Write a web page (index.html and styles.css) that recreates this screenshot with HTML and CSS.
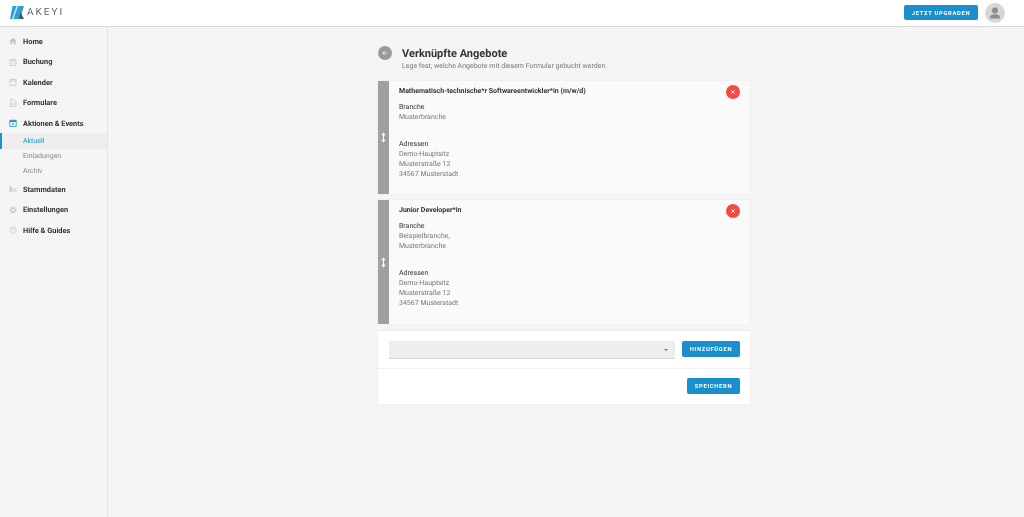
FILE: index.html
```html
<!DOCTYPE html>
<html lang="de">
<head>
    <meta charset="UTF-8">
    <title>Verknüpfte Angebote</title>
    <link rel="stylesheet" href="styles.css">
</head>
<body>
    <header class="topbar">
        <div class="logo">
            <svg class="logo-mark" width="14" height="13" viewBox="0 0 14 13">
                <path d="M2.5 0 H14 L10 13 H0 Z" fill="#2ba3d6"/>
                <path d="M8 0 L3.4 13 H2.2 L6.6 0 Z" fill="#d8f0fa"/>
                <path d="M10.5 6 L14 13 H8.6 Z" fill="#4c5a62"/>
            </svg>
            <span class="logo-text">AKEYI</span>
        </div>
        <div class="topbar-right">
            <button class="btn upgrade">JETZT UPGRADEN</button>
            <div class="avatar">
                <svg width="20" height="20" viewBox="0 0 20 20">
                    <circle cx="10" cy="7.5" r="3" fill="#8d8d8d"/>
                    <path d="M5 15.5 C5 12 7 11.2 10 11.2 C13 11.2 15 12 15 15.5 Z" fill="#8d8d8d"/>
                </svg>
            </div>
        </div>
    </header>

    <div class="layout">
        <nav class="sidebar">
            <a class="nav-item">
                <svg class="nav-icon" viewBox="0 0 8 8"><path d="M4 .8 L7.6 4 H6.6 V7.2 H4.8 V5 H3.2 V7.2 H1.4 V4 H.4 Z" fill="#c4c4c4"/></svg>
                Home
            </a>
            <a class="nav-item">
                <svg class="nav-icon" viewBox="0 0 8 8"><path d="M1 1.5 H7 V7.4 H1 Z M1 3 H7" fill="none" stroke="#c8c8c8" stroke-width=".8"/><path d="M2.8 5.2 L3.8 6.1 L5.4 4.4" fill="none" stroke="#c8c8c8" stroke-width=".6"/></svg>
                Buchung
            </a>
            <a class="nav-item">
                <svg class="nav-icon" viewBox="0 0 8 8"><path d="M1 1.5 H7 V7.4 H1 Z M1 3 H7 M2.4 .6 V2 M5.6 .6 V2" fill="none" stroke="#c8c8c8" stroke-width=".8"/></svg>
                Kalender
            </a>
            <a class="nav-item">
                <svg class="nav-icon" viewBox="0 0 8 8"><path d="M1.5 .6 H5 L6.8 2.4 V7.4 H1.5 Z" fill="none" stroke="#c8c8c8" stroke-width=".8"/><path d="M2.8 4.2 H5.4 M2.8 5.6 H5.4" stroke="#c8c8c8" stroke-width=".6"/></svg>
                Formulare
            </a>
            <a class="nav-item">
                <svg class="nav-icon" viewBox="0 0 8 8"><path d="M.8 1.4 H7.2 V7.5 H.8 Z" fill="none" stroke="#1a93c9" stroke-width=".8"/><path d="M.8 1.4 H7.2 V3 H.8 Z M3.2 4.2 H4.8 V5.8 H3.2 Z M2 .5 H2.8 V1.6 H2 Z M5.2 .5 H6 V1.6 H5.2 Z" fill="#1a93c9"/></svg>
                Aktionen &amp; Events
            </a>
            <a class="sub-item active">Aktuell</a>
            <a class="sub-item">Einladungen</a>
            <a class="sub-item">Archiv</a>
            <a class="nav-item">
                <svg class="nav-icon" viewBox="0 0 8 8"><path d="M.4 1.4 H3 V7 H.4 Z" fill="#cfcfcf"/><path d="M3.4 3 H7.6 V7 H3.4 Z" fill="#dedede"/></svg>
                Stammdaten
            </a>
            <a class="nav-item">
                <svg class="nav-icon" viewBox="0 0 8 8"><circle cx="4" cy="4" r="2.2" fill="none" stroke="#c4c4c4" stroke-width="1.2"/><path d="M4 .4 V1.6 M4 6.4 V7.6 M.4 4 H1.6 M6.4 4 H7.6 M1.4 1.4 L2.2 2.2 M5.8 5.8 L6.6 6.6 M1.4 6.6 L2.2 5.8 M5.8 2.2 L6.6 1.4" stroke="#c4c4c4" stroke-width=".9"/></svg>
                Einstellungen
            </a>
            <a class="nav-item">
                <svg class="nav-icon" viewBox="0 0 8 8"><circle cx="4" cy="4" r="3.3" fill="none" stroke="#c8c8c8" stroke-width=".7"/><path d="M3 3.2 C3 1.9 5 1.9 5 3.2 C5 4 4 4 4 4.9 M4 5.5 V6.2" fill="none" stroke="#c8c8c8" stroke-width=".7"/></svg>
                Hilfe &amp; Guides
            </a>
        </nav>

        <main class="content">
            <div class="page-head">
                <div class="back">
                    <svg width="8" height="8" viewBox="0 0 8 8"><path d="M6.4 4 H1.8 M3.6 2.2 L1.8 4 L3.6 5.8" fill="none" stroke="#fff" stroke-width=".8"/></svg>
                </div>
                <div>
                    <h1>Verknüpfte Angebote</h1>
                    <p>Lege fest, welche Angebote mit diesem Formular gebucht werden.</p>
                </div>
            </div>

            <section class="offer offer-first">
                <div class="handle">
                    <svg width="7" height="11" viewBox="0 0 7 11"><path d="M3.5 1 V10" stroke="#fff" stroke-width="1"/><path d="M1.3 3.2 L3.5 .6 L5.7 3.2 Z M1.3 7.8 L3.5 10.4 L5.7 7.8 Z" fill="#fff"/></svg>
                </div>
                <div class="offer-body">
                    <h2>Mathematisch-technische*r Softwareentwickler*in (m/w/d)</h2>
                    <h3>Branche</h3>
                    <p>Musterbranche</p>
                    <h3 class="addr">Adressen</h3>
                    <p>Demo-Hauptsitz<br>Musterstraße 12<br>34567 Musterstadt</p>
                </div>
                <button class="remove" aria-label="Entfernen">
                    <svg width="6" height="6" viewBox="0 0 6 6"><path d="M1.2 1.2 L4.8 4.8 M4.8 1.2 L1.2 4.8" stroke="#fff" stroke-width=".9"/></svg>
                </button>
            </section>

            <section class="offer offer-second">
                <div class="handle">
                    <svg width="7" height="11" viewBox="0 0 7 11"><path d="M3.5 1 V10" stroke="#fff" stroke-width="1"/><path d="M1.3 3.2 L3.5 .6 L5.7 3.2 Z M1.3 7.8 L3.5 10.4 L5.7 7.8 Z" fill="#fff"/></svg>
                </div>
                <div class="offer-body">
                    <h2>Junior Developer*in</h2>
                    <h3>Branche</h3>
                    <p>Beispielbranche,<br>Musterbranche</p>
                    <h3 class="addr">Adressen</h3>
                    <p>Demo-Hauptsitz<br>Musterstraße 12<br>34567 Musterstadt</p>
                </div>
                <button class="remove" aria-label="Entfernen">
                    <svg width="6" height="6" viewBox="0 0 6 6"><path d="M1.2 1.2 L4.8 4.8 M4.8 1.2 L1.2 4.8" stroke="#fff" stroke-width=".9"/></svg>
                </button>
            </section>

            <section class="add-card">
                <div class="add-row">
                    <div class="select"><span class="caret"></span></div>
                    <button class="btn add">HINZUFÜGEN</button>
                </div>
                <div class="save-row">
                    <button class="btn save">SPEICHERN</button>
                </div>
            </section>
        </main>
    </div>
</body>
</html>
```

FILE: styles.css
```css
* { box-sizing: border-box; }
html, body { height: 100%; }
body { margin: 0; background: #f5f5f5; color: #333; font-family: Roboto, "Noto Sans", sans-serif; font-size: 7px; overflow: hidden; text-rendering: geometricPrecision; }

.topbar { height: 27px; background: #fff; border-bottom: 1px solid #d9d9d9; display: flex; align-items: center; justify-content: space-between; padding: 0 19px 1px 10px; will-change: transform; }
.logo { display: flex; align-items: center; gap: 3px; }
.logo-text { font-size: 10px; letter-spacing: 2px; color: #5c6870; }
.topbar-right { display: flex; align-items: center; gap: 7px; }
.avatar { width: 20px; height: 20px; border-radius: 50%; background: #d6d6d6; overflow: hidden; }

.btn { border: none; border-radius: 2px; background: #1a8fcb; color: #fff; font-family: inherit; font-size: 5.8px; font-weight: 700; letter-spacing: .7px; padding: 0; height: 15.5px; }
.upgrade { width: 74px; }
.add { width: 58px; }
.save { width: 53px; }

/* grey text antialiasing, the coloured fringes look wrong at this size */
.layout { display: flex; height: 490px; will-change: transform; }
.sidebar { width: 108px; border-right: 1px solid #e4e4e4; padding-top: 4.3px; flex-shrink: 0; }
.nav-item { display: flex; align-items: center; height: 20.4px; padding-left: 9px; gap: 6px; font-size: 7.4px; font-weight: 700; color: #333; }
.nav-icon { width: 8px; height: 8px; }
.sub-item { display: flex; align-items: center; height: 15.3px; padding-left: 23px; color: #888; font-size: 7px; }
.sub-item.active { color: #1a93d0; background: #eee; border-left: 2px solid #1a93d0; padding-left: 21px; }

.content { flex: 1; padding: 18px 0 0 270px; }
.page-head { display: flex; align-items: center; gap: 10px; width: 372px; height: 27px; margin-bottom: 9px; }
.back { width: 14px; height: 14px; border-radius: 50%; background: #999; display: flex; align-items: center; justify-content: center; align-self: flex-start; margin-top: 1px; }
h1 { margin: 0; font-size: 11px; line-height: 15px; font-weight: 700; color: #333; }
.page-head p { margin: 0; font-size: 7px; line-height: 10px; color: #777; }

.offer { position: relative; display: flex; width: 372px; background: #fafafa; box-shadow: 0 0 1px #ddd; }
.offer-first { height: 113px; margin-bottom: 6px; }
.offer-second { height: 124px; margin-bottom: 7px; }
.handle { width: 11px; background: #a0a0a0; display: flex; align-items: center; justify-content: center; flex-shrink: 0; }
.offer-body { padding: 4.5px 0 0 10px; }
h2 { margin: 0 0 5.5px; font-size: 7px; line-height: 11px; font-weight: 700; color: #333; }
h3 { margin: 0; font-size: 7px; line-height: 10px; font-weight: 400; color: #333; }
h3.addr { margin-top: 17px; }
.offer-body p { margin: 0; font-size: 7px; line-height: 10px; color: #777; }
.remove { position: absolute; top: 3.5px; right: 10px; width: 14px; height: 14px; border: none; border-radius: 50%; background: #f44a40; padding: 0; display: flex; align-items: center; justify-content: center; }

.add-card { width: 372px; height: 73px; background: #fff; box-shadow: 0 0 1px #ddd; }
.add-row { display: flex; align-items: flex-start; justify-content: space-between; height: 38px; padding: 10px 10px 0 11px; border-bottom: 1px solid #f1f1f1; }
.select { position: relative; width: 286px; height: 17.5px; background: #eee; border-bottom: 1px solid #d6d6d6; }
.caret { position: absolute; right: 7px; top: 8px; border-left: 2.5px solid transparent; border-right: 2.5px solid transparent; border-top: 2.5px solid #777; }
.save-row { display: flex; justify-content: flex-end; align-items: flex-start; height: 35px; padding: 9px 10px 0; }
```
